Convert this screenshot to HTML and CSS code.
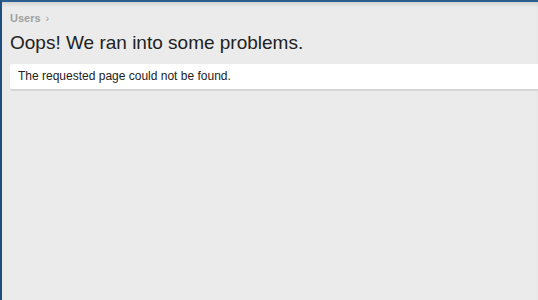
FILE: index.html
```html
<!DOCTYPE html>
<html lang="en">
<head>
  <meta charset="UTF-8">
  <meta name="viewport" content="width=device-width, initial-scale=1.0">
  <title>Oops! We ran into some problems.</title>
  <link rel="stylesheet" href="styles.css">
</head>
<body>
  <div class="page">
    <div class="breadcrumb">
      <a href="#">Users</a><span class="arrow">&rsaquo;</span>
    </div>
    <h1>Oops! We ran into some problems.</h1>
    <div class="block-message">
      The requested page could not be found.
    </div>
  </div>
</body>
</html>
```

FILE: styles.css
```css
html, body {
  height: 100%;
}

body {
  margin: 0;
  font-family: "Liberation Sans", Arial, sans-serif;
  background-color: #ebebeb;
  overflow: hidden;
}

.page {
  box-sizing: border-box;
  height: 100%;
  border-left: 2px solid #1f4f7f;
  border-top: 2px solid #2b5d8f;
  box-shadow: inset 0 4px 4px -2px rgba(0, 0, 0, 0.12);
  padding: 9px 0 0 8px;
}

.breadcrumb {
  font-size: 11px;
  font-weight: bold;
  line-height: 14px;
  color: #a0a0a0;
}

.breadcrumb a {
  color: #a0a0a0;
  text-decoration: none;
}

.breadcrumb .arrow {
  font-weight: normal;
  margin-left: 5px;
}

h1 {
  margin: 6px 0 10px;
  font-size: 19px;
  font-weight: normal;
  line-height: 23px;
  color: #222;
}

.block-message {
  background-color: #fff;
  border-radius: 3px 0 0 3px;
  border-bottom: 2px solid #d6d6d6;
  padding: 5px 8px;
  font-size: 12px;
  line-height: 15px;
  color: #222;
}
```
